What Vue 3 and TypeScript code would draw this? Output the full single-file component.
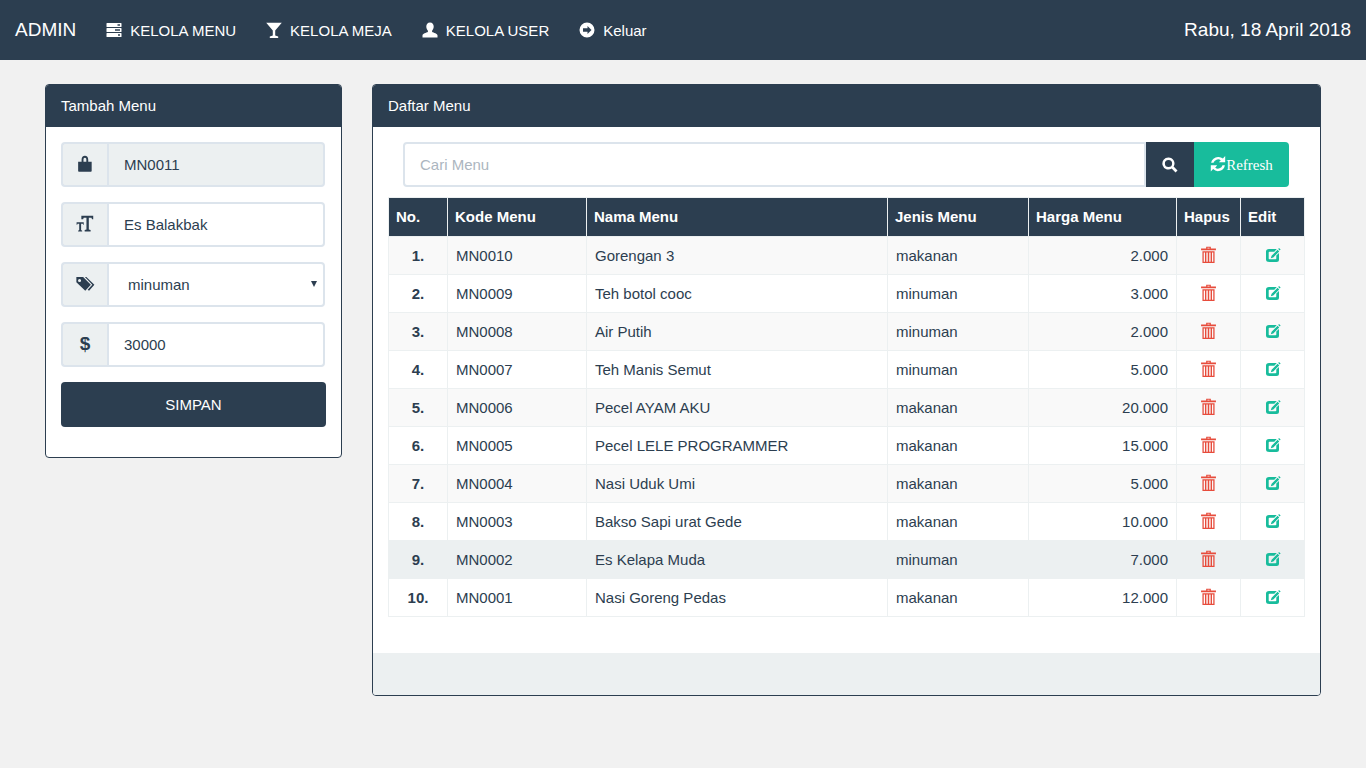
<script setup lang="ts">
import { ref } from 'vue'

interface MenuRow {
  kode: string
  nama: string
  jenis: string
  harga: string
}

const icons: Record<string, string> = {
  tasks: 'M.5 1.500Q.5 1 1 1h14q.5 0 .5.5v3q0 .5-.5.5H1q-.5 0-.5-.5zM11.500 2.300v1.400h2.500V2.300zM.5 6.500Q.5 6 1 6h14q.5 0 .5.5v3q0 .5-.5.5H1q-.5 0-.5-.5zM9 7.300v1.400h5V7.300zM.5 11.500Q.5 11 1 11h14q.5 0 .5.500v3q0 .5-.5.5H1q-.5 0-.5-.5zM12 12.300v1.400h2v-1.400z',
  glass: 'M.2 .8h15.600L9.200 8.500v5l3 1V16H3.800v-1.500l3-1v-5z',
  user: 'M8 .5c2.400 0 3.700 1.800 3.700 4.100 0 1.600-.6 3.200-1.600 4.100v1.300c1.600.7 5.400 1.600 5.400 3.300v2.200H.5v-2.200c0-1.700 3.800-2.600 5.400-3.300V8.700c-1-.9-1.600-2.500-1.600-4.100C4.300 2.300 5.600.5 8 .5z',
  exit: 'M8 .5a7.500 7.500 0 1 0 0 15 7.500 7.500 0 0 0 0-15zM8.500 4 12.500 8l-4 4V9.800H4V6.200h4.500z',
  lock: 'M7.500 1.500C5.800 1.500 4.700 2.700 4.700 4.800v1.700H1.800v7.800q0 .7.7.7h10q.7 0 .7-.7V6.500h-2.900V4.800c0-2.100-1.100-3.300-2.800-3.300zM7.500 3.200c.8 0 1.200.6 1.200 1.600v1.700H6.300V4.800c0-1 .4-1.600 1.200-1.600z',
  textSize: 'M4.500 1.500H14.500V4.500H13.500L13 3.200H10.800V13L12.300 13.500V14.800H7.300V13.500L8.800 13V3.200H6.500L6 4.500H4.500zM.5 7H6.500V9H6L5.700 8.300H4.300V13.500L5.200 14V14.800H1.800V14L2.700 13.500V8.300H1.300L1 9H.5z',
  tags: 'M.3 2.500H6L12.500 9 7.800 14 .3 7zM3 4.200a1.300 1.300 0 1 0 0 2.600 1.300 1.300 0 0 0 0-2.600zM7.500 2.500h1.200l6.800 6.500L11 14l-1.200-.8L13.700 9z',
  search: 'M6.500.5a6 6 0 1 0 3.200 11l3.800 3.900 2-2-3.900-3.800A6 6 0 0 0 6.500.5zM6.500 2.900a3.600 3.600 0 1 1 0 7.200 3.600 3.600 0 0 1 0-7.200z',
  refresh: 'M8 1a7 7 0 0 0-6.900 5.800h2.400a4.700 4.700 0 0 1 7.300-2.500L8.800 6.300H15.200V0l-2.300 2.500A7 7 0 0 0 8 1zM.8 9.200V15.500l2.300-2.400A7 7 0 0 0 14.900 9.200h-2.400a4.700 4.700 0 0 1-7.300 2.500l2-2.500z',
  trash: 'M5.800 .8h4.400v1.500H15v1.700H1V2.300h4.800zM7 1.700v.6h2v-.6zM2.300 5h11.400v11H2.300zM3.500 6.200v8.600h1.200V6.200zM6 6.200v8.600h1.300V6.200zM8.700 6.200v8.600H10V6.200zM11.300 6.200v8.600h1.200V6.200z',
  edit: 'M4 2H11.800L9.300 4.700H4.500Q3.700 4.700 3.700 5.500v6q0 .8.8.8h6q.8 0 .8-.8V8.600L14 6v6.500Q14 15 11.500 15h-7Q1 15 1 12.500v-8Q1 2 4 2zM12.600 2.800l1.600 1.600-5.900 6-2.500.8.8-2.500zM14 1l1.600 1.600-.8.9-1.600-1.600z',
}

const navItems = [
  { label: 'KELOLA MENU', icon: 'tasks' },
  { label: 'KELOLA MEJA', icon: 'glass' },
  { label: 'KELOLA USER', icon: 'user' },
  { label: 'Keluar', icon: 'exit' },
]

const rows: MenuRow[] = [
  { kode: 'MN0010', nama: 'Gorengan 3', jenis: 'makanan', harga: '2.000' },
  { kode: 'MN0009', nama: 'Teh botol cooc', jenis: 'minuman', harga: '3.000' },
  { kode: 'MN0008', nama: 'Air Putih', jenis: 'minuman', harga: '2.000' },
  { kode: 'MN0007', nama: 'Teh Manis Semut', jenis: 'minuman', harga: '5.000' },
  { kode: 'MN0006', nama: 'Pecel AYAM AKU', jenis: 'makanan', harga: '20.000' },
  { kode: 'MN0005', nama: 'Pecel LELE PROGRAMMER', jenis: 'makanan', harga: '15.000' },
  { kode: 'MN0004', nama: 'Nasi Uduk Umi', jenis: 'makanan', harga: '5.000' },
  { kode: 'MN0003', nama: 'Bakso Sapi urat Gede', jenis: 'makanan', harga: '10.000' },
  { kode: 'MN0002', nama: 'Es Kelapa Muda', jenis: 'minuman', harga: '7.000' },
  { kode: 'MN0001', nama: 'Nasi Goreng Pedas', jenis: 'makanan', harga: '12.000' },
]

const nama = ref('Es Balakbak')
const jenis = ref('minuman')
const harga = ref('30000')
const cari = ref('')
const hoverIndex = ref(8)
</script>

<template>
  <nav class="navbar">
    <span class="brand">ADMIN</span>
    <a v-for="item in navItems" :key="item.label" class="nav-link">
      <svg class="nav-icon" viewBox="0 0 16 16"><path fill-rule="evenodd" :d="icons[item.icon]" /></svg>
      {{ item.label }}
    </a>
    <span class="today">Rabu, 18 April 2018</span>
  </nav>

  <main class="page">
    <section class="panel panel-form">
      <div class="panel-heading">Tambah Menu</div>
      <div class="form-body">
        <div class="input-group">
          <span class="addon"><svg class="addon-icon" viewBox="0 0 16 16"><path fill-rule="evenodd" :d="icons.lock" /></svg></span>
          <input class="control" value="MN0011" disabled />
        </div>
        <div class="input-group">
          <span class="addon"><svg class="addon-icon" viewBox="0 0 16 16"><path fill-rule="evenodd" :d="icons.textSize" /></svg></span>
          <input v-model="nama" class="control" />
        </div>
        <div class="input-group">
          <span class="addon"><svg class="addon-icon" viewBox="0 0 16 16"><path fill-rule="evenodd" :d="icons.tags" /></svg></span>
          <div class="select-wrap">
            <select v-model="jenis" class="control control-select">
              <option>makanan</option>
              <option>minuman</option>
            </select>
          </div>
        </div>
        <div class="input-group">
          <span class="addon addon-text">$</span>
          <input v-model="harga" class="control" />
        </div>
        <button class="btn-save">SIMPAN</button>
      </div>
    </section>

    <section class="panel panel-list">
      <div class="panel-heading">Daftar Menu</div>
      <div class="list-body">
        <div class="search-bar">
          <input v-model="cari" class="control search-input" placeholder="Cari Menu" />
          <button class="btn-search">
            <svg class="search-icon" viewBox="0 0 16 16"><path fill-rule="evenodd" :d="icons.search" /></svg>
          </button>
          <button class="btn-refresh">
            <svg class="refresh-icon" viewBox="0 0 16 16"><path :d="icons.refresh" /></svg><span class="refresh-text">Refresh</span>
          </button>
        </div>
        <table class="menu-table">
          <colgroup>
            <col class="col-no" />
            <col class="col-kode" />
            <col class="col-nama" />
            <col class="col-jenis" />
            <col class="col-harga" />
            <col class="col-hapus" />
            <col class="col-edit" />
          </colgroup>
          <thead>
            <tr>
              <th>No.</th>
              <th>Kode Menu</th>
              <th>Nama Menu</th>
              <th>Jenis Menu</th>
              <th>Harga Menu</th>
              <th>Hapus</th>
              <th>Edit</th>
            </tr>
          </thead>
          <tbody>
            <tr v-for="(row, i) in rows" :key="row.kode" :class="{ hovered: i === hoverIndex }">
              <td class="no">{{ i + 1 }}.</td>
              <td>{{ row.kode }}</td>
              <td>{{ row.nama }}</td>
              <td>{{ row.jenis }}</td>
              <td class="harga">{{ row.harga }}</td>
              <td class="action">
                <svg class="row-icon trash" viewBox="0 0 16 16"><path fill-rule="evenodd" :d="icons.trash" /></svg>
              </td>
              <td class="action">
                <svg class="row-icon edit" viewBox="0 0 16 16"><path fill-rule="evenodd" :d="icons.edit" /></svg>
              </td>
            </tr>
          </tbody>
        </table>
      </div>
      <div class="panel-footer"></div>
    </section>
  </main>
</template>

<style scoped>
.navbar {
  display: flex;
  align-items: center;
  height: 60px;
  background: #2c3e50;
  color: #fff;
  font-size: 15px;
  padding: 0 15px;
}

.brand {
  font-size: 19px;
  margin-right: 15px;
}

.nav-link {
  display: flex;
  align-items: center;
  padding: 0 15px;
  gap: 8px;
  color: #fff;
}

.nav-icon {
  width: 16px;
  height: 16px;
  fill: #fff;
}

.today {
  margin-left: auto;
  font-size: 19px;
}

.page {
  display: flex;
  align-items: flex-start;
  gap: 30px;
  padding: 24px 45px;
}

.panel {
  box-sizing: border-box;
  background: #fff;
  border: 1px solid #2c3e50;
  border-radius: 4px;
  overflow: hidden;
}

.panel-form {
  width: 297px;
  flex: none;
}

.panel-list {
  width: 949px;
  flex: none;
}

.panel-heading {
  height: 42px;
  line-height: 42px;
  padding: 0 15px;
  background: #2c3e50;
  color: #fff;
}

.form-body {
  padding: 15px 15px 30px;
  display: flex;
  flex-direction: column;
  gap: 15px;
}

.input-group {
  display: flex;
  height: 45px;
  margin-right: 1px;
}

.addon {
  width: 46px;
  flex: none;
  display: flex;
  align-items: center;
  justify-content: center;
  background: #ecf0f1;
  border: 2px solid #dce4ec;
  border-right: 0;
  border-radius: 4px 0 0 4px;
  box-sizing: border-box;
  padding-bottom: 2px;
}

.addon-icon {
  width: 19px;
  height: 19px;
  fill: #2c3e50;
}

.addon-text {
  font-size: 19px;
  font-weight: 700;
  color: #2c3e50;
}

.control {
  flex: 1;
  min-width: 0;
  box-sizing: border-box;
  height: 45px;
  padding: 10px 15px;
  border: 2px solid #dce4ec;
  border-radius: 0 4px 4px 0;
  background: #fff;
  color: #2c3e50;
  font: 15px "Liberation Sans", Arial, sans-serif;
  outline: none;
}

.control:disabled {
  background: #ecf0f1;
  opacity: 1;
}

.control::placeholder {
  color: #acb6c0;
}

.select-wrap {
  flex: 1;
  min-width: 0;
  display: flex;
  position: relative;
}

.select-wrap::after {
  content: "";
  position: absolute;
  right: 8px;
  top: 19px;
  border-left: 3.5px solid transparent;
  border-right: 3.5px solid transparent;
  border-top: 6px solid #2c3e50;
  pointer-events: none;
}

.control-select {
  width: 100%;
  padding-left: 19px;
  appearance: none;
}

.btn-save {
  height: 45px;
  border: 0;
  border-radius: 4px;
  background: #2c3e50;
  color: #fff;
  font: 15px "Liberation Sans", Arial, sans-serif;
}

.list-body {
  padding: 15px;
  height: 526px;
  box-sizing: border-box;
}

.search-bar {
  display: flex;
  height: 45px;
  margin: 0 16px 10px 15px;
}

.search-input {
  border-radius: 4px 0 0 4px;
}

.btn-search {
  width: 48px;
  border: 0;
  background: #2c3e50;
  display: flex;
  align-items: center;
  justify-content: center;
  padding: 0;
}

.search-icon {
  width: 16px;
  height: 16px;
  fill: #fff;
}

.btn-refresh {
  width: 95px;
  border: 0;
  border-radius: 0 4px 4px 0;
  background: #18bc9c;
  color: #fff;
  font: 15px "Liberation Serif", "Times New Roman", serif;
  display: flex;
  align-items: center;
  justify-content: center;
  padding: 0;
}

.refresh-icon {
  width: 16px;
  height: 16px;
  fill: #fff;
  margin-bottom: 2px;
}

.refresh-text {
  padding-top: 2px;
}

.menu-table {
  width: 916px;
  table-layout: fixed;
  border-collapse: collapse;
  border: 1px solid #ecf0f1;
}

.col-no { width: 59px; }
.col-kode { width: 139px; }
.col-nama { width: 301px; }
.col-jenis { width: 141px; }
.col-harga { width: 148px; }
.col-hapus { width: 64px; }
.col-edit { width: 64px; }

.menu-table th {
  height: 39px;
  padding: 0 8px 1px 7px;
  box-sizing: border-box;
  background: #2c3e50;
  color: #fff;
  font-weight: 700;
  text-align: left;
  border: 1px solid #ecf0f1;
}

.menu-table td {
  height: 38px;
  padding: 0 8px;
  box-sizing: border-box;
  border: 1px solid #ecf0f1;
}

.menu-table tbody tr:nth-child(odd) {
  background: #f9f9f9;
}

.menu-table tbody tr.hovered {
  background: #ecf0f1;
}

.no {
  font-weight: 700;
  text-align: center;
}

.harga {
  text-align: right;
}

.menu-table td.action {
  text-align: center;
  line-height: 0;
  padding: 0 8px 2px;
}

.row-icon {
  vertical-align: middle;
}

.trash {
  width: 17px;
  height: 17px;
  fill: #e74c3c;
}

.edit {
  width: 16px;
  height: 16px;
  fill: #18bc9c;
}

.panel-footer {
  height: 42px;
  background: #ecf0f1;
}
</style>

<style>
body {
  background: #f1f1f1;
  color: #2c3e50;
  font: 15px "Liberation Sans", Arial, sans-serif;
}
</style>
